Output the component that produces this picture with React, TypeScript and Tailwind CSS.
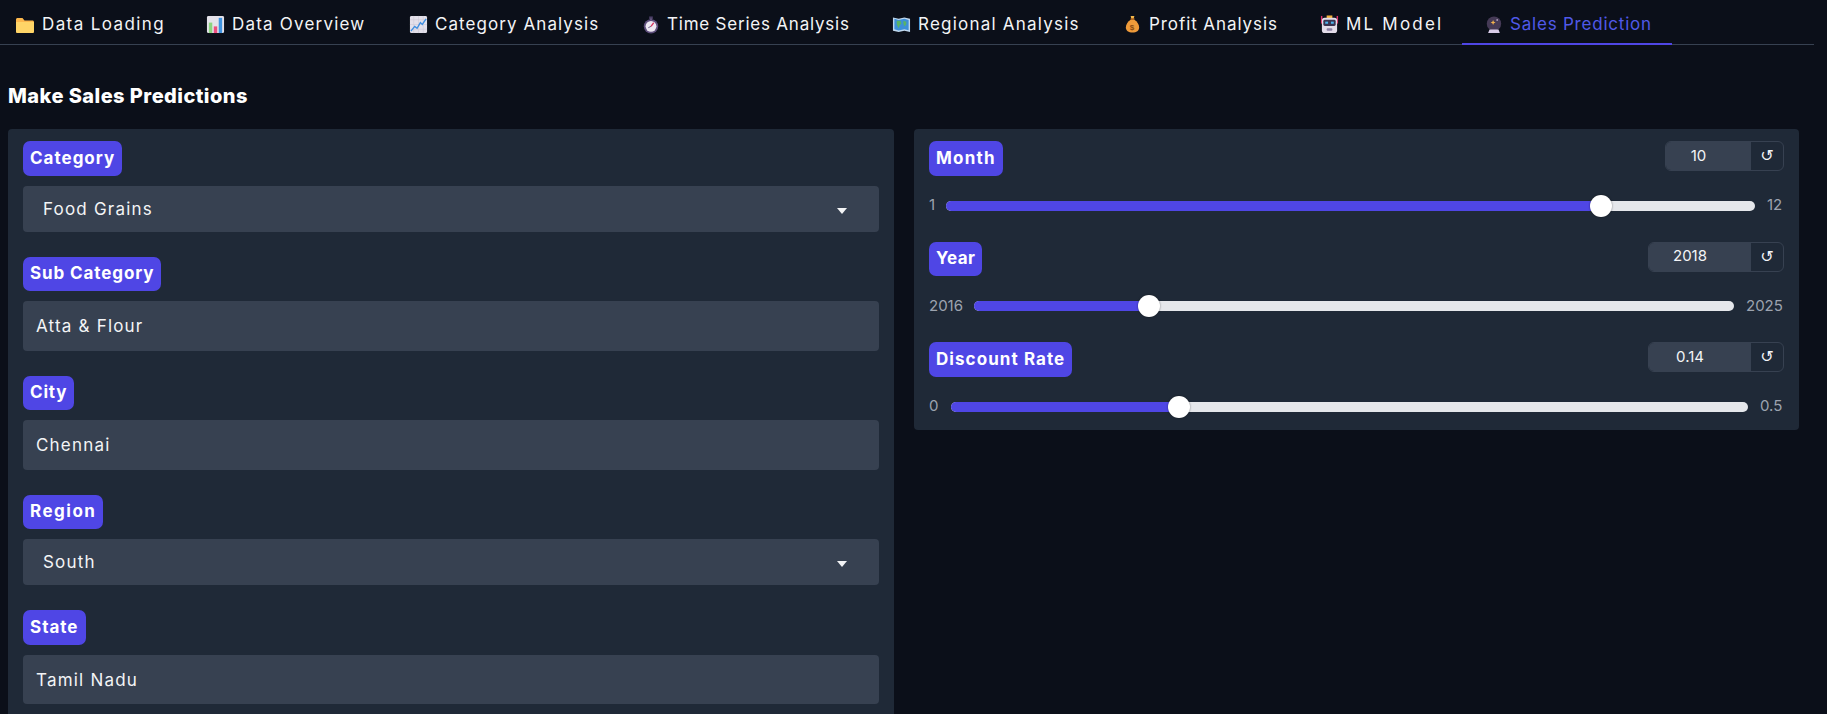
const FONT = "font-['Inter','Noto_Sans',sans-serif]";

function Emoji({ name }: { name: string }) {
  if (name === "folder")
    return (
      <svg viewBox="0 0 20 20" className="w-[20px] h-[20px] shrink-0">
        <path d="M1 4.500C1 3.700 1.700 3 2.500 3h5l2 2.500h8c.8 0 1.500.7 1.500 1.500v9.500c0 .8-.7 1.500-1.500 1.500h-15C1.700 18 1 17.300 1 16.500z" fill="#FDB84D" />
        <path d="M1 7h18v9.500c0 .8-.7 1.500-1.500 1.500h-15C1.700 18 1 17.300 1 16.500z" fill="#FFD567" />
      </svg>
    );
  if (name === "bars")
    return (
      <svg viewBox="0 0 20 20" className="w-[19px] h-[19px] shrink-0">
        <rect x="1" y="1" width="18" height="18" rx="1.500" fill="#E4E2EA" />
        <rect x="3" y="8" width="3.600" height="11" fill="#8BD47F" />
        <rect x="8.200" y="12" width="3.600" height="7" fill="#EE4E7E" />
        <rect x="13.400" y="3" width="3.600" height="16" fill="#3F93E0" />
      </svg>
    );
  if (name === "chart")
    return (
      <svg viewBox="0 0 20 20" className="w-[19px] h-[19px] shrink-0">
        <rect x="1" y="1" width="18" height="18" rx="1.500" fill="#E3E0EA" />
        <path d="M5 1v18M10 1v18M15 1v18M1 5h18M1 10h18M1 15h18" stroke="#CBC6D6" strokeWidth="0.600" />
        <path d="M2 17l4-5 2.500 2L12 8l2 2 4-6" stroke="#3F8FE0" strokeWidth="1.500" fill="none" />
      </svg>
    );
  if (name === "watch")
    return (
      <svg viewBox="0 0 20 20" className="w-[18px] h-[18px] shrink-0">
        <rect x="8" y="0.500" width="4" height="3" fill="#4B3F66" />
        <rect x="9" y="3" width="2" height="2" fill="#7B6E94" />
        <circle cx="10" cy="11.500" r="8" fill="#5E4F7C" />
        <circle cx="10" cy="11.500" r="6" fill="#EDE8F2" />
        <path d="M10 11.500l3-4" stroke="#D8345F" strokeWidth="1.400" />
        <path d="M10 11.500L7 13" stroke="#5E4F7C" strokeWidth="1" />
      </svg>
    );
  if (name === "map")
    return (
      <svg viewBox="0 0 20 20" className="w-[19px] h-[19px] shrink-0">
        <path d="M1 2.500l6 1.500 6-1.500 6 1.500v14l-6-1.500-6 1.500-6-1.500z" fill="#BFD8EE" />
        <path d="M2.500 4l4.500 1.200L13 4l4.500 1.200v10.800L13 15l-6 1.200L2.500 15z" fill="#3D8FD8" />
        <path d="M5 6h4l1 3-2 2-1 3-2-4zM12 6l3 1v3l-2 2-1-3z" fill="#58B368" />
      </svg>
    );
  if (name === "bag")
    return (
      <svg viewBox="0 0 20 20" className="w-[19px] h-[19px] shrink-0">
        <path d="M8 1h4l-.8 3H8.800z" fill="#F5B84A" />
        <rect x="8" y="3.500" width="4" height="1.500" fill="#C96F1E" />
        <path d="M8 5h4c3 1.800 5 5 5 8.200 0 3.300-2.700 5.300-7 5.300s-7-2-7-5.300C3 10 5 6.800 8 5z" fill="#EE9A3A" />
        <text x="10" y="15.500" textAnchor="middle" fontSize="8.500" fontWeight="700" fill="#8A4B12" fontFamily="Liberation Sans">$</text>
      </svg>
    );
  if (name === "robot")
    return (
      <svg viewBox="0 0 20 20" className="w-[19px] h-[19px] shrink-0">
        <rect x="1" y="1" width="1.500" height="8" fill="#E0356B" />
        <rect x="17.500" y="1" width="1.500" height="8" fill="#E0356B" />
        <rect x="7" y="0.500" width="6" height="3" fill="#F2B13C" />
        <rect x="2" y="3" width="16" height="16" rx="3" fill="#E4DDEA" />
        <rect x="3.500" y="5" width="13" height="6.500" rx="1.500" fill="#3A3350" />
        <rect x="5.500" y="7" width="3" height="2.200" fill="#4FB6F0" />
        <rect x="11.500" y="7" width="3" height="2.200" fill="#4FB6F0" />
        <rect x="7" y="14" width="6" height="2.500" rx="1" fill="#8B7FA3" />
      </svg>
    );
  return (
    <svg viewBox="0 0 20 20" className="w-[18px] h-[18px] shrink-0">
      <circle cx="10" cy="8.500" r="8" fill="#453A56" />
      <path d="M9 4.500l.8 2 2 .8-2 .8-.8 2-.8-2-2-.8 2-.8z" fill="#F2B24E" />
      <circle cx="13.500" cy="4.500" r="0.900" fill="#E9D8F2" />
      <path d="M5 15h10l1.500 4h-13z" fill="#D9CCE8" />
    </svg>
  );
}

const tabs = [
  { label: "Data Loading", icon: "folder", box: "w-[185px] pl-[15px] tracking-[1.4px]" },
  { label: "Data Overview", icon: "bars", box: "w-[203px] pl-[21px] tracking-[1.2px]" },
  { label: "Category Analysis", icon: "chart", box: "w-[233px] pl-[21px] tracking-[1.07px]" },
  { label: "Time Series Analysis", icon: "watch", box: "w-[250px] pl-[21px] tracking-[0.78px]" },
  { label: "Regional Analysis", icon: "map", box: "w-[231px] pl-[21px] tracking-[1.22px]" },
  { label: "Profit Analysis", icon: "bag", box: "w-[197px] pl-[21px] tracking-[0.92px]" },
  { label: "ML Model", icon: "robot", box: "w-[163px] pl-[21px] tracking-[2.2px]" },
  { label: "Sales Prediction", icon: "ball", box: "w-[210px] pl-[23px] tracking-[0.79px]", active: true },
];

function Badge({ children, track }: { children: string; track: string }) {
  return (
    <span className={`inline-flex items-center h-[34.5px] self-start px-[7px] rounded-[7px] bg-[#4F46E5] text-white text-[17px] font-bold ${track}`}>
      {children}
    </span>
  );
}

function Field({ label, value, track, select }: { label: string; value: string; track: string; select?: boolean }) {
  return (
    <div className="flex flex-col gap-[10px] mb-[25px]">
      <Badge track={track}>{label}</Badge>
      {select ? (
        <div className="flex items-center justify-between h-[46px] pt-[2px] pl-[20px] pr-[32px] rounded-[4px] bg-[#374151] text-[#F3F4F6] text-[17px] tracking-[1.2px]">
          {value}
          <svg viewBox="0 0 10 6" className="w-[10px] h-[6px] mt-[2px]">
            <path d="M0 0h10L5 6z" fill="#F3F4F6" />
          </svg>
        </div>
      ) : (
        <div className="flex items-center h-[49.500px] pt-[2px] px-[13px] rounded-[4px] bg-[#374151] text-[#F3F4F6] text-[17px] tracking-[1.2px]">
          {value}
        </div>
      )}
    </div>
  );
}

function Slider({ label, value, min, max, track, minBox, maxBox, inputBox }: {
  label: string;
  value: number;
  min: number;
  max: number;
  track: string;
  minBox: string;
  maxBox: string;
  inputBox: string;
}) {
  // thumb stays inside the track, like a native range input
  const ratio = (value - min) / (max - min);
  const thumbPos = `calc(11px + (100% - 22px) * ${ratio})`;
  return (
    <div className="flex flex-col mb-[24px] last:mb-0">
      <div className="flex items-start justify-between">
        <Badge track={track}>{label}</Badge>
        <div className="flex h-[30px] rounded-[6px] border border-[#374151] text-[15px] text-[#F3F4F6]">
          <div className={`flex items-center justify-center pr-[20px] bg-[#374151] rounded-l-[5px] ${inputBox}`}>{value}</div>
          <div className="flex items-center justify-center w-[32px] text-[16px] font-['DejaVu_Sans',sans-serif]">↺</div>
        </div>
      </div>
      <div className="flex items-center gap-[12px] h-[24px] mt-[18px] text-[15px] text-[#9CA3AF]">
        <span className={`whitespace-nowrap ${minBox}`}>{min}</span>
        <div className="relative flex-1 h-[10px] rounded-full bg-[#E5E7EB]">
          <div className="h-full rounded-l-full bg-[#4F46E5]" style={{ width: thumbPos }} />
          <div
            className="absolute top-1/2 w-[22px] h-[22px] -translate-x-1/2 -translate-y-1/2 rounded-full bg-white shadow-[0_0_2px_rgba(0,0,0,0.5)]"
            style={{ left: thumbPos }}
          />
        </div>
        <span className={`whitespace-nowrap ${maxBox}`}>{max}</span>
      </div>
    </div>
  );
}

export default function App() {
  return (
    <div className={`h-screen overflow-hidden bg-[#0B0F19] ${FONT}`}>
      <div className="flex w-[1814px] h-[45px] border-b border-[#374151]">
        {tabs.map((tab) => (
          <div
            key={tab.label}
            className={`flex items-center gap-[7px] h-[45px] text-[17px] whitespace-nowrap ${tab.box} ${
              tab.active ? "pt-[6px] border-b-2 border-[#4F46E5] text-[#5059E8]" : "pt-[4px] text-[#F3F4F6]"
            }`}
          >
            <Emoji name={tab.icon} />
            {tab.label}
          </div>
        ))}
      </div>

      <h2 className="ml-[8px] mt-[40px] mb-[21px] h-[23px] leading-[23px] text-[20px] font-extrabold text-white tracking-[0.45px]">
        Make Sales Predictions
      </h2>

      <div className="grid grid-cols-[886px_885px] gap-[20px] ml-[8px] items-start">
        <div className="rounded-[4px] bg-[#1F2937] px-[15px] pt-[12px]">
          <Field label="Category" value="Food Grains" track="tracking-[1px]" select />
          <Field label="Sub Category" value="Atta & Flour" track="tracking-[0.9px]" />
          <Field label="City" value="Chennai" track="tracking-[0.8px]" />
          <Field label="Region" value="South" track="tracking-[1.5px]" select />
          <Field label="State" value="Tamil Nadu" track="tracking-[1px]" />
        </div>
        <div className="rounded-[4px] bg-[#1F2937] px-[15px] pt-[12px] pb-[11.500px]">
          <Slider label="Month" value={10} min={1} max={12} track="tracking-[1.2px]" minBox="w-[5px]" maxBox="w-[17px]" inputBox="w-[85px]" />
          <Slider label="Year" value={2018} min={2016} max={2025} track="tracking-[0.4px]" minBox="w-[33px]" maxBox="w-[38px]" inputBox="w-[102px]" />
          <Slider label="Discount Rate" value={0.14} min={0} max={0.5} track="tracking-[1.07px]" minBox="w-[10px]" maxBox="w-[24px]" inputBox="w-[102px]" />
        </div>
      </div>
    </div>
  );
}
